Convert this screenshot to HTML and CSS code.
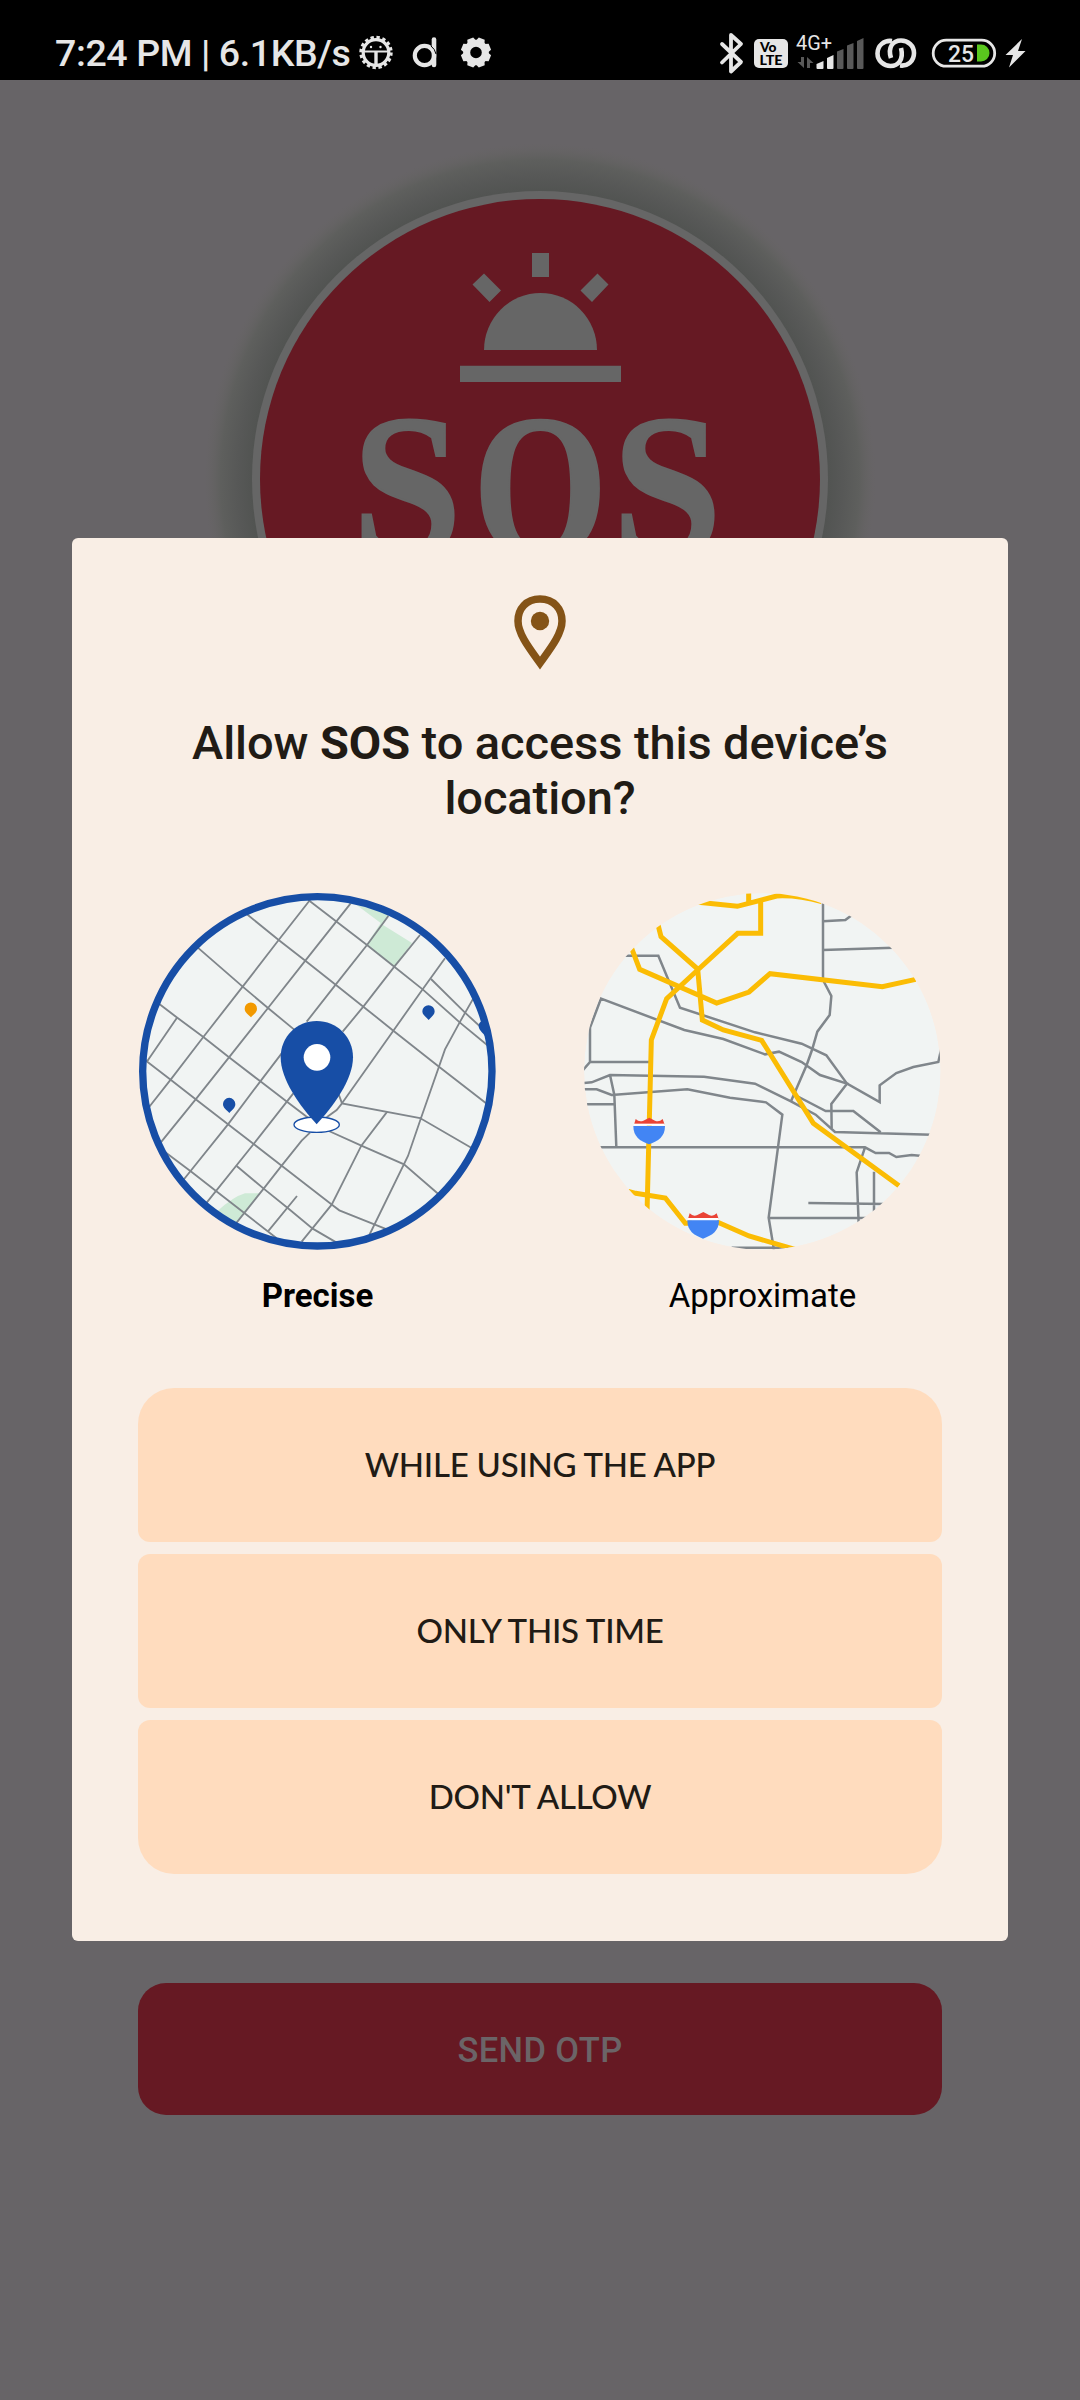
FILE: index.html
```html
<!DOCTYPE html>
<html lang="en">
<head>
<meta charset="utf-8">
<title>SOS</title>
<link rel="stylesheet" href="styles.css">
</head>
<body>
<div class="screen">
  <header class="status">
    <span class="clock">7:24 PM | 6.1KB/s</span>
    <svg class="status-left" width="134" height="36" viewBox="0 0 134 36">
      <g fill="none" stroke="#e6e6e6">
        <circle cx="17" cy="17.500" r="12.800" stroke-width="3.200"/>
        <circle cx="17" cy="17.500" r="15" stroke-width="3.400" stroke-dasharray="3.300 2.590"/>
        <path d="M4 16.500H30" stroke-width="2"/>
        <path d="M17 17V31" stroke-width="3.400"/>
      </g>
      <circle cx="12" cy="12" r="1.200" fill="#e6e6e6"/><circle cx="21.500" cy="12" r="1.200" fill="#e6e6e6"/>
      <circle cx="65.500" cy="20.500" r="9.700" fill="none" stroke="#e6e6e6" stroke-width="4.200"/>
      <path d="M75 4.500V30" stroke="#e6e6e6" stroke-width="4.600" stroke-linecap="round"/>
      <path d="M72 11Q76 14 77 19" stroke="#000" stroke-width="1" fill="none"/>
      <g transform="translate(117 17.500)">
        <circle r="9.300" fill="none" stroke="#e6e6e6" stroke-width="7"/>
        <g fill="#e6e6e6">
          <path id="tooth" d="M-4.600 -11L-3.200 -15H3.200L4.600 -11Z" transform="rotate(22.500)"/>
          <use href="#tooth" transform="rotate(45)"/><use href="#tooth" transform="rotate(90)"/><use href="#tooth" transform="rotate(135)"/><use href="#tooth" transform="rotate(180)"/><use href="#tooth" transform="rotate(225)"/><use href="#tooth" transform="rotate(270)"/><use href="#tooth" transform="rotate(315)"/>
        </g>
      </g>
    </svg>
    <svg class="status-right" width="320" height="50" viewBox="715 27 320 50">
      <path d="M722 43L741 61L731 70.500V34L741 43L722 61.500" fill="none" stroke="#e6e6e6" stroke-width="3.800" stroke-linejoin="round" stroke-linecap="round"/>
      <rect x="754" y="38" width="34" height="29" rx="5" fill="#e6e6e6"/>
      <g font-family="Lato, sans-serif" font-weight="900" fill="#000">
        <text x="760" y="51" font-size="12.500" textLength="16.500" lengthAdjust="spacingAndGlyphs">Vo</text>
        <text x="759.500" y="63.500" font-size="13" textLength="23" lengthAdjust="spacingAndGlyphs">LTE</text>
      </g>
      <text x="796" y="49" font-family="Roboto, sans-serif" font-size="20" fill="#e6e6e6" textLength="36" lengthAdjust="spacingAndGlyphs">4G+</text>
      <g fill="#595959">
        <path d="M801 56H804V67L797.500 61H801ZM807 67V56L813.500 62H810V67Z"/>
        <path d="M837 50.500L843.500 48V67Q843.500 68 842.500 68H838Q837 68 837 67ZM847 44.500L853.500 42V67Q853.500 68 852.500 68H848Q847 68 847 67ZM857 40L863.500 37V67Q863.500 68 862.500 68H858Q857 68 857 67Z"/>
      </g>
      <path d="M816.500 63L823.500 60V67Q823.500 68 822.500 68H817.500Q816.500 68 816.500 67ZM827 57L833.500 54V67Q833.500 68 832.500 68H828Q827 68 827 67Z" fill="#e6e6e6"/>
      <g fill="none" stroke="#e6e6e6" stroke-width="4.600">
        <path d="M892 40C884 39 877.500 44.500 877.500 52.500C877.500 60 884 65 890.500 65C898 65 904 59 901 47"/>
        <path d="M900 64.500C908 65.500 914 60 914 52C914 44.500 908 39.500 901 39.500C893 39.500 887.500 46 891 57"/>
      </g>
      <rect x="933.200" y="39.200" width="61.500" height="26" rx="13" fill="none" stroke="#e6e6e6" stroke-width="2.800"/>
      <path d="M977 43.500H981A8.500 8.500 0 0 1 981 60.500H977Z" fill="#5ac81e"/>
      <text x="948" y="61" font-family="Roboto, sans-serif" font-size="23" font-weight="500" fill="#e6e6e6" textLength="26" lengthAdjust="spacingAndGlyphs">25</text>
      <path d="M1022 38L1005.500 54H1013L1009 66.500L1025.500 50H1018Z" fill="#e6e6e6"/>
    </svg>
  </header>

  <main class="app">
    <svg class="logo" width="680" height="680" viewBox="200 139 680 680">
      <defs>
        <radialGradient id="halo">
          <stop offset=".86" stop-color="#525452"/>
          <stop offset=".9" stop-color="#575857"/>
          <stop offset=".95" stop-color="#5e5f5d"/>
          <stop offset="1" stop-color="#666463" stop-opacity="0"/>
        </radialGradient>
      </defs>
      <circle cx="540" cy="479" r="336" fill="url(#halo)"/>
      <circle cx="540" cy="479" r="288" fill="#666"/>
      <circle cx="540" cy="479" r="280" fill="#661923"/>
      <g fill="#666">
        <path d="M532 253H549V277H532ZM484 273.500L501 290.500L489.500 302L472.500 284.500ZM597.500 273.500L608.500 284.500L592 302L580.500 290.500Z"/>
        <path d="M484 350A56.500 57 0 0 1 597 350Z"/>
        <path d="M460 365.700H621V382H460Z"/>
        <g class="wordmark">
          <text transform="translate(352 556) scale(.96 1)">S</text>
          <text transform="translate(473 556) scale(.84 1)">O</text>
          <text transform="translate(612 556) scale(.96 1)">S</text>
        </g>
      </g>
    </svg>
    <button class="send">SEND OTP</button>
  </main>

  <section class="dialog">
    <svg class="pin" width="54" height="76" viewBox="0 0 54 76">
      <path d="M27 4C13 4 5 14 5 26C5 39 17 54 27 68C37 54 49 39 49 26C49 14 41 4 27 4Z" fill="none" stroke="#845317" stroke-width="7.500"/>
      <circle cx="27" cy="26" r="9.200" fill="#845317"/>
    </svg>
    <h1 class="title">Allow <b>SOS</b> to access this device’s<br>location?</h1>
    <div class="choices">
      <div class="choice chosen">
        <svg class="map" viewBox="24 36 1077 1077">
          <defs><clipPath id="c1"><circle cx="562" cy="574" r="522"/></clipPath></defs>
          <circle cx="562" cy="574" r="522" fill="#f1f4f3"/>
          <g clip-path="url(#c1)">
            <path d="M680 75L780 100L758 134L846 189L793 260L711 192L752 129ZM260 995Q310 950 345 940H388L320 1030Z" fill="#ceead6"/>
            <g fill="none" stroke="#80868b" stroke-width="5.500">
              <path d="M350 102L446 180L526 242L617 314L700 380L790 452L927 560L1075 675M200 200L338 320L414 384L500 455M535 60L620 125L711 195L793 260L878 328L989 427L1075 498M903 297L1005 398L1075 462M85 370L140 412L220 471L297 532L391 604L472 666L540 718M45 540L122 599L197 658L294 733L371 792L455 857L606 974L628 991L780 1052M100 812L184 875L258 933L343 999L440 1075M320 858L401 926L474 985L548 1046L620 1088"/>
              <path d="M540 60L446 180L338 320L220 471L122 599L55 684M662 70L526 242L414 384L297 532L197 658L90 790M775 108L711 195L617 314L530 425M455 520L391 604L294 733L160 900M870 165L793 260L700 380L638 455M490 640L371 792L230 968M945 235L878 328L790 452L636 670M142 412L50 546M540 758L515 782L455 857L401 926L318 1030M501 948L414 1054"/>
              <path d="M1030 355L989 427L945 508L872 717L834 828L718 1065M625 640L636 670L870 714L1025 804M590 750L694 797L822 853L925 942M770 697L694 797L605 974L515 1085M636 670L620 690L590 712"/>
            </g>
            <path d="M1065 422C1050 422 1046 430 1046 439C1046 450 1060 460 1065 468H1090V422Z" fill="#174ea6"/>
          </g>
          <circle cx="562" cy="574" r="524" fill="none" stroke="#174ea6" stroke-width="22"/>
          <ellipse cx="560" cy="734" rx="68" ry="23" fill="#fff" stroke="#174ea6" stroke-width="4"/>
          <path d="M560 423C500 423 452 470 452 532C452 600 511 680 560 733C609 680 669 600 669 532C669 470 620 423 560 423Z" fill="#174ea6"/>
          <circle cx="561" cy="532" r="40" fill="#fff"/>
          <path d="M363 412C354 402 344 397 344 386A18.500 18.500 0 0 1 381 386C381 397 372 402 363 412Z" fill="#f29900"/>
          <path d="M896 420C887 410 877 405 877 394A18.500 18.500 0 0 1 914 394C914 405 905 410 896 420ZM298 699C289 689 279 684 279 672A18.500 18.500 0 0 1 316 672C316 684 307 689 298 699Z" fill="#174ea6"/>
        </svg>
        <span class="label">Precise</span>
      </div>
      <div class="choice">
        <svg class="map" viewBox="24 36 1077 1077">
          <defs><clipPath id="c2"><circle cx="562" cy="574" r="535"/></clipPath></defs>
          <g clip-path="url(#c2)">
            <circle cx="562" cy="574" r="535" fill="#f1f4f3"/>
            <g fill="none" stroke="#80868b" stroke-width="7.500">
              <path d="M744 60V300L769 348L764 405L727 455L711 510L695 555L648 664M744 124L811 120L835 102M744 210L955 203M140 227H250L315 383L540 457L680 491L754 526L816 611L914 666V616L964 579L1015 561L1090 546L1100 500"/>
              <path d="M20 575L45 546V443L78 356L328 450L445 477L570 523L612 515L680 546L735 585L816 611L769 672L770 745M45 546H225"/>
              <path d="M20 610L50 607L105 585L387 590L540 611L648 664L722 704L780 756L1070 764M20 628H65L110 645L337 628L465 653L573 667L622 704L581 1013L597 1110M660 645L752 693H835L917 757M105 585L118 645L124 802M30 673H118M70 802H870L902 819H942L964 831L1010 825L1050 829M870 802L845 877L851 1030M897 875V1000M700 969L930 972M581 1014H880M470 1103H640"/>
            </g>
            <g fill="none" stroke="#fbbc04" stroke-width="15">
              <path d="M370 67L487 79L605 48Q670 45 740 65M521 30V68M557 62V160H488L368 270L275 356L229 480L216 1000M248 130L258 170L368 267L382 420L445 450L560 481L715 730L972 917M168 200L194 268L425 369L522 336L585 281L922 320L1022 298"/>
              <path d="M160 934L182 940L271 954L331 1030H350M425 1025L522 1068L660 1108"/>
            </g>
          </g>
          <g id="shield">
            <path d="M177 734L182 717Q193 728 205 722L223 713L240 722Q252 728 263 717L269 734Z" fill="#ea4335"/>
            <path d="M176 731H269V737H176Z" fill="#fff"/>
            <path d="M175 738H270C270 770 250 783 222 793C195 783 175 770 175 738Z" fill="#4285f4"/>
          </g>
          <use href="#shield" x="162" y="283"/>
        </svg>
        <span class="label">Approximate</span>
      </div>
    </div>
    <div class="actions">
      <button class="action">WHILE USING THE APP</button>
      <button class="action">ONLY THIS TIME</button>
      <button class="action">DON'T ALLOW</button>
    </div>
  </section>
</div>
</body>
</html>
```
FILE: styles.css
```css
* { box-sizing: border-box; }
body { margin: 0; background: #676467; font-family: Roboto, "Liberation Sans", sans-serif; }
button { border: 0; padding: 0; margin: 0; display: block; font-family: inherit; }
svg { display: block; flex: none; }
.screen { position: relative; width: 1080px; height: 2400px; overflow: hidden; background: #676467; display: flex; flex-direction: column; }
.status { height: 80px; flex: none; background: #000; display: flex; align-items: center; padding: 25px 45px 0 55px; }
.clock { font-size: 37.500px; line-height: 44px; font-weight: 500; letter-spacing: -.4px; color: #e6e6e6; white-space: nowrap; width: 304px; }
.status-right { margin-left: auto; }
.app { flex: 1; display: flex; flex-direction: column; align-items: center; padding-top: 59px; }
.wordmark { font-family: "Liberation Serif", serif; font-weight: 700; font-size: 206px; stroke: #666; stroke-width: 2px; }
.send { margin-top: 1164px; width: 804px; height: 132px; padding-top: 2px; border-radius: 28px; background: #661923; color: #6b6467; font-size: 34.500px; font-weight: 500; letter-spacing: .4px; }
.dialog { position: absolute; left: 72px; top: 538px; width: 936px; height: 1403px; border-radius: 6px; background: #f9eee5; padding: 57px 66px 67px; display: flex; flex-direction: column; align-items: center; }
.title { margin: 44px 0 0; height: 110px; font-size: 47px; line-height: 55px; font-weight: 500; letter-spacing: -.08px; color: #211b15; text-align: center; white-space: nowrap; }
.title b { font-weight: 700; }
.choices { width: 100%; display: flex; justify-content: space-between; margin-top: 67px; }
.choice { width: 359px; display: flex; flex-direction: column; align-items: center; }
.map { width: 359px; height: 359px; }
.label { margin-top: 25px; font-size: 33px; line-height: 40px; color: #000; }
.chosen .label { font-weight: 700; }
.actions { width: 100%; margin-top: auto; display: flex; flex-direction: column; gap: 12px; }
.action { height: 154px; padding-bottom: 3px; border-radius: 12px; background: #ffdcbe; color: #211b15; font-family: Lato, sans-serif; font-size: 33px; font-weight: 500; letter-spacing: -.25px; }
.action:first-child { border-radius: 36px 36px 12px 12px; }
.action:last-child { border-radius: 12px 12px 36px 36px; }
```
